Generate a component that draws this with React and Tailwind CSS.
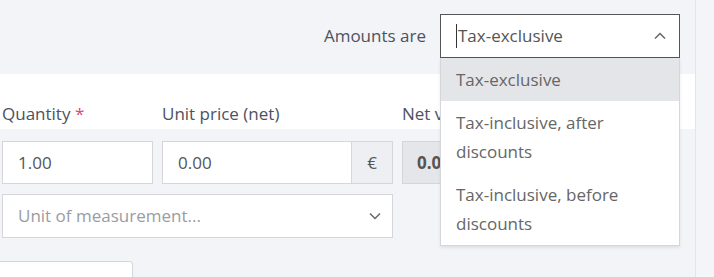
import React from 'react';

const ChevronUp = () => (
    <svg width="14" height="14" viewBox="0 0 14 14" fill="none" stroke="#666" strokeWidth="1.5">
        <path d="M2 9.5 L7 4.5 L12 9.5" />
    </svg>
);

const ChevronDown = () => (
    <svg width="14" height="14" viewBox="0 0 14 14" fill="none" stroke="#666" strokeWidth="1.5">
        <path d="M2 4.5 L7 9.5 L12 4.5" />
    </svg>
);

const options = [
    ["Tax-exclusive"],
    ["Tax-inclusive, after", "discounts"],
    ["Tax-inclusive, before", "discounts"],
];

const App = () => {
    return (
        <div className="relative flex h-[277px] w-[714px] overflow-hidden bg-[#f3f4f8] font-['Open_Sans',sans-serif] text-[17px] text-[#555]">
            <div className="flex w-[695px] shrink-0 flex-col">
                {/* top bar */}
                <div className="flex h-[74px] shrink-0 items-start justify-end gap-[14px] pr-[15px] pt-[14px]">
                    <span className="mt-[9px] text-[#4d5260]">Amounts are</span>
                    <div className="flex h-[44px] w-[240px] items-center border border-[#555] bg-white pl-[15px] pr-[12px]">
                        <span className="mr-[1px] h-[24px] w-[1px] bg-[#333]"></span>
                        <span className="flex-1 text-[#555]">Tax-exclusive</span>
                        <ChevronUp />
                    </div>
                </div>

                {/* labels band */}
                <div className="flex h-[55px] shrink-0 items-end gap-[9px] bg-white pb-[3px] pl-[2px] text-[#4d5260]">
                    <div className="w-[151px]">
                        Quantity <span className="text-[#e0457b]">*</span>
                    </div>
                    <div className="w-[231px]">Unit price (net)</div>
                    <div className="w-[38px] overflow-hidden whitespace-nowrap">Net value</div>
                </div>

                {/* inputs */}
                <div className="flex shrink-0 flex-col gap-[10px] pl-[2px] pt-[12px]">
                    <div className="flex gap-[9px]">
                        <div className="flex h-[43px] w-[151px] items-center border border-[#d5d6da] bg-white px-[15px] text-[#555]">1.00</div>
                        <div className="flex h-[43px] w-[231px]">
                            <div className="flex flex-1 items-center border border-[#d5d6da] bg-white px-[15px] text-[#555]">0.00</div>
                            <div className="flex w-[41px] items-center justify-center border border-l-0 border-[#d5d6da] bg-[#eeeff2] text-[#555]">€</div>
                        </div>
                        <div className="flex h-[43px] w-[38px] items-center overflow-hidden whitespace-nowrap border border-r-0 border-[#d5d6da] bg-[#e5e6ea] pl-[14px] font-bold text-[#555]">0.00</div>
                    </div>
                    <div className="flex h-[44px] w-[391px] items-center border border-[#d5d6da] bg-white pl-[15px] pr-[10px]">
                        <span className="flex-1 text-[#9a9ca3]">Unit of measurement...</span>
                        <ChevronDown />
                    </div>
                </div>

                <div className="mt-[23px] h-[40px] w-[133px] shrink-0 rounded-tr-[4px] border border-l-0 border-[#d5d6da] bg-white"></div>
            </div>
            <div className="flex-1 border-l border-[#e4e5e9] bg-[#f4f5f9]"></div>

            {/* dropdown menu */}
            <div className="absolute left-[440px] top-[58px] w-[240px] border border-t-0 border-[#d5d6da] bg-white shadow-[0_2px_3px_rgba(0,0,0,0.08)]">
                {options.map((lines, i) => (
                    <div key={i} className={"px-[15px] py-[7px] leading-[29px] text-[#666] " + (i === 0 ? "bg-[#e4e5e9]" : "")}>
                        {lines.map((l, j) => (
                            <div key={j}>{l}</div>
                        ))}
                    </div>
                ))}
            </div>
        </div>
    );
};

export default App;
